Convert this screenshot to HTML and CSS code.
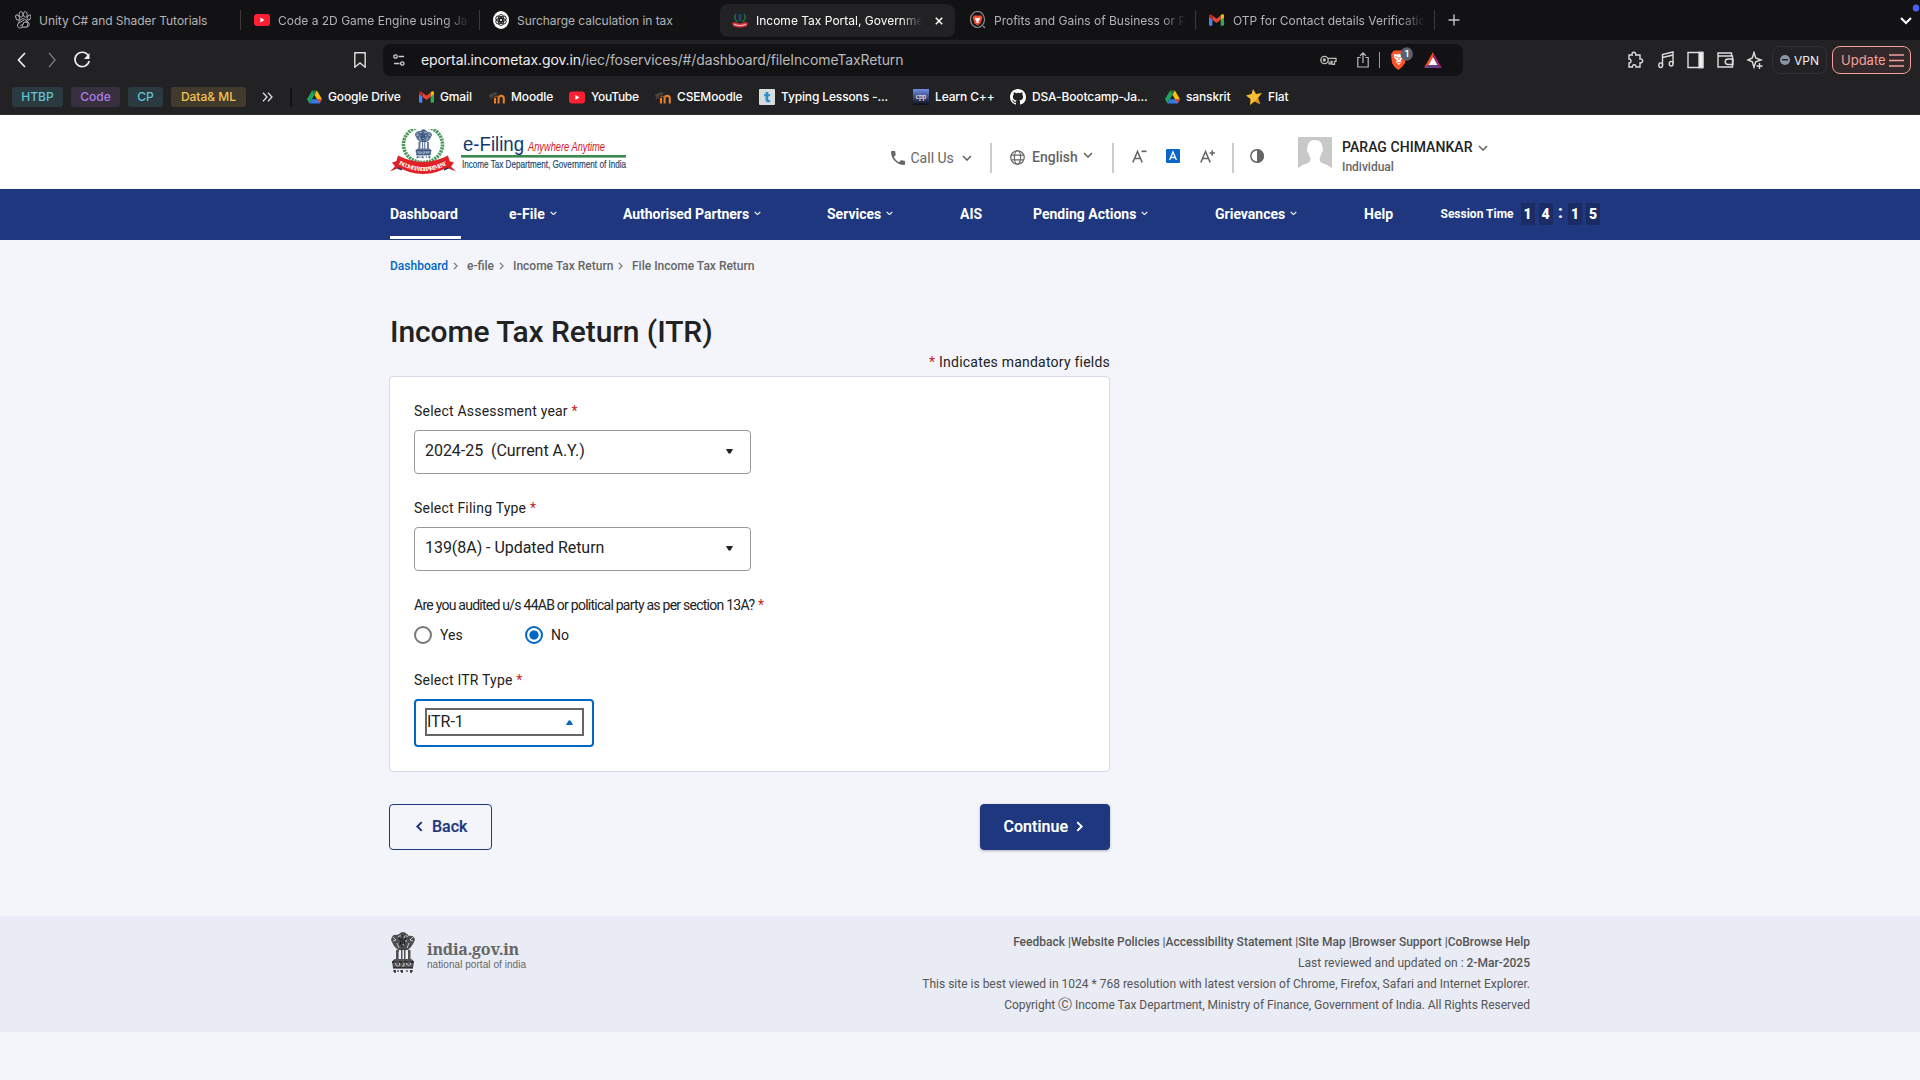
FILE: index.html
```html
<!DOCTYPE html>
<html lang="en">
<head>
<meta charset="utf-8">
<title>Income Tax Portal, Government of India</title>
<link rel="stylesheet" href="styles.css">
</head>
<body>
<svg class="defs" width="0" height="0" aria-hidden="true">
  <symbol id="yt" viewBox="0 0 16 12"><rect width="16" height="12" rx="3" fill="#ff1f33"/><path d="M6.4 3.6v4.8L10.4 6z" fill="#fff"/></symbol>
  <symbol id="gmail" viewBox="0 0 16 12"><path d="M0 1.5V11a1 1 0 0 0 1 1h2.6V5z" fill="#4285f4"/><path d="M16 1.5V11a1 1 0 0 1-1 1h-2.600V5z" fill="#34a853"/><path d="M12.400 1.200V5.800L16 3V1.500C16 0 14.200-.5 13.200.5z" fill="#fbbc04"/><path d="M3.600 5.800V1.200L8 4.600l4.400-3.400v4.600L8 9.200z" fill="#ea4335"/><path d="M0 1.500V3l3.600 2.800V1.200L2.800.5C1.800-.4 0 0 0 1.500z" fill="#c5221f"/></symbol>
  <symbol id="drive" viewBox="0 0 16 14"><path d="M5.400 0h5.200L8 4.600z" fill="#188038"/><path d="M5.400 0L8 4.600 2.700 14 0 9.300z" fill="#1ea362"/><path d="M5.400 9.300H16L13.300 14H2.700z" fill="#2f7de9"/><path d="M10.600 0L16 9.300h-5.300L8 4.600z" fill="#ffc107"/><path d="M10.700 9.300H16L13.300 14z" fill="#ea4335"/></symbol>
  <symbol id="moodle" viewBox="0 0 16 12"><path d="M6 12V6.500M9.600 12V7C9.600 3.300 14.800 3.300 14.800 7v5" fill="none" stroke="#ef7f22" stroke-width="2"/><path d="M5.500 5.500q2-1.800 4 .5" fill="none" stroke="#8a5327" stroke-width="1.500"/><path d="M0 3.500L6 1l2.500 1L3 4.500 4.500 6.500l-1 .5L1.500 4v4" fill="#4a4341" stroke="#5a4b42" stroke-width=".5"/></symbol>
  <symbol id="down" viewBox="0 0 10 6"><path d="M1 1l4 4 4-4" fill="none" stroke="currentColor" stroke-width="1.600"/></symbol>
  <symbol id="right" viewBox="0 0 6 10"><path d="M1 1l4 4-4 4" fill="none" stroke="currentColor" stroke-width="1.500"/></symbol>
  <symbol id="lions" viewBox="0 0 26 42">
    <path d="M9 3q4-4 8 0l2 2q5-1 6 4l-2 4-2 3-3 3H8L4 15 1 9q1-6 6-5z" fill="currentColor" opacity=".72"/>
    <path d="M6 19h3v10H6zM11 18h1.500v11H11zM14 18h1.500v11H14zM18 19h2.500v10H18zM2 31q2-4 6-3h10q4-1 6 3l-1 6H3z" fill="currentColor" opacity=".7"/>
    <path d="M3 6l3 3-3 1M23 6l-3 3 3 1M8 6q3-3 4 1M14 7q1-4 4-1M10 10h2m3 0h2M11 13q2 2 4 0M7 12l2 5m10-5l-2 5M9 21v7m8-7v7M5 32q4-3 5 2-3 3-5-2m11 1q4-4 5 0-2 3-5 0M12 31h2v4h-2" fill="none" stroke="#fff" stroke-width=".9" opacity=".75"/>
    <path d="M9 7l2 3-1 4M16 7l-2 3 1 4M12 4v12M2 31h22M3 37h20" fill="none" stroke="currentColor" stroke-width="1"/>
    <path d="M3 40h3m1 0h2m1 0h3m3 0h2m2 0h3M5 39v3m7-3v3m9-3v3" stroke="currentColor" stroke-width="1.200"/>
  </symbol>
</svg>

<div class="browser">
  <div class="tabs">
    <div class="tab"><svg class="fav" viewBox="0 0 16 18" fill="none" stroke="#a9a9ab" stroke-width="1"><ellipse cx="2.600" cy="6.500" rx="1.700" ry="2.700" transform="rotate(-25 2.600 6.500)"/><ellipse cx="6" cy="3.400" rx="1.900" ry="2.800"/><ellipse cx="10.300" cy="3.400" rx="1.900" ry="2.800"/><ellipse cx="14" cy="6.500" rx="1.600" ry="2.700" transform="rotate(25 14 6.500)"/><path d="M5 9q3-3 6 0l3 3q1 4-3 4-3-1-5 1-4 0-3.500-3zM4 12l5-3M5 15l7-5"/><path d="M9 11l4 1-1 4-5 0z" fill="#000"/></svg><span class="tt t1">Unity C# and Shader Tutorials</span></div>
    <div class="tab"><svg class="fav"><use href="#yt" width="16" height="14" y="2"/></svg><span class="tt fade">Code a 2D Game Engine using Java</span></div>
    <div class="tab plain"><svg class="fav" viewBox="0 0 16 18"><ellipse cx="8" cy="9" rx="8" ry="9" fill="#fff"/><g fill="none" stroke="#222" stroke-width=".9"><ellipse cx="8" cy="7" rx="2.600" ry="3.600"/><ellipse cx="8" cy="7" rx="2.600" ry="3.600" transform="rotate(60 8 9)"/><ellipse cx="8" cy="7" rx="2.600" ry="3.600" transform="rotate(120 8 9)"/><ellipse cx="8" cy="7" rx="2.600" ry="3.600" transform="rotate(180 8 9)"/><ellipse cx="8" cy="7" rx="2.600" ry="3.600" transform="rotate(240 8 9)"/><ellipse cx="8" cy="7" rx="2.600" ry="3.600" transform="rotate(300 8 9)"/></g></svg><span class="tt t3">Surcharge calculation in tax</span></div>
    <div class="tab active"><svg class="fav" viewBox="0 0 16 18"><path d="M4 3q-3 5 2 8M12 3q3 5-2 8" fill="none" stroke="#176b3c" stroke-width="1.600"/><path d="M8 3v7" stroke="#27406f" stroke-width="3"/><path d="M0 12l3-1q5 3 10 0l3 1-1 3q-7 3-14 0z" fill="#d9303e"/><path d="M2 13.500q6 2.500 12 0" stroke="#f6c9cc" fill="none"/></svg><span class="tt t4 fade">Income Tax Portal, Governmen</span><svg class="close" viewBox="0 0 8 8"><path d="M.8.8l6.400 6.400M7.200.8L.8 7.200" stroke="#fff" stroke-width="1.500"/></svg></div>
    <div class="tab"><svg class="fav" viewBox="0 0 16 18"><ellipse cx="7.500" cy="8.500" rx="7" ry="8" fill="none" stroke="#8e8e92" stroke-width="1.200"/><path d="M13 15l2 2" stroke="#8e8e92" stroke-width="1.400"/><path d="M4 4.500h7.500l1 2-2 6-3 2-3-2-2-6z" fill="#ef4a2e"/><path d="M5.500 6.500l2 .7 2-.7.700 1.500-1.700 2 .3 1.500-1.300.8-1.300-.8.300-1.500-1.700-2z" fill="#fff"/></svg><span class="tt fade">Profits and Gains of Business or Pr</span></div>
    <div class="tab"><svg class="fav"><use href="#gmail" width="15" height="13" y="2.500"/></svg><span class="tt fade">OTP for Contact details Verification</span></div>
    <svg class="plus" viewBox="0 0 12 12"><path d="M6 .5v11M.5 6h11" stroke="#c4c4c6" stroke-width="1.400"/></svg>
    <svg class="tabmenu" viewBox="0 0 24 30"><path d="M5 18l5 5 5-5" fill="none" stroke="#fff" stroke-width="2"/><ellipse cx="20" cy="8" rx="3.200" ry="3.500" fill="#4c63f0"/></svg>
  </div>

  <div class="toolbar">
    <svg class="navbtns" viewBox="0 0 84 20" fill="none"><path d="M9 3l-6.500 7L9 17" stroke="#eee" stroke-width="1.700"/><path d="M33 3l6 7-6 7" stroke="#737376" stroke-width="1.500"/><path d="M72.500 6A7.200 7.200 0 1 0 73.200 11" stroke="#eee" stroke-width="1.600"/><path d="M73.500 3v6h-5.500z" fill="#eee"/></svg>
    <svg class="bm" viewBox="0 0 12 16"><path d="M.8.800h10.400v14.400L6 11 .8 15.200z" fill="none" stroke="#ddd" stroke-width="1.400"/></svg>
    <div class="address">
      <svg class="tune" viewBox="0 0 12 12" fill="none" stroke="#ccc" stroke-width="1.300"><circle cx="2.500" cy="2.500" r="1.700"/><path d="M5.500 2.500H11M1 9.500h5.500"/><circle cx="9.300" cy="9.500" r="1.700"/></svg>
      <span class="url"><b>eportal.incometax.gov.in</b>/iec/foservices/#/dashboard/fileIncomeTaxReturn</span>
      <svg class="key" viewBox="0 0 17 12" fill="none" stroke="#bbb" stroke-width="1.300"><circle cx="4.500" cy="6" r="3.700"/><circle cx="4.300" cy="6" r="1" fill="#bbb"/><path d="M8 4.300h8v3h-1.500v3h-2.500v-3H11v2.500H9V7.500"/></svg>
      <svg class="share" viewBox="0 0 12 16" fill="none" stroke="#bbb" stroke-width="1.200"><path d="M3.500 5.500H.8V15h10.400V5.500H8.500M6 11V1M3 3.800l3-3 3 3"/></svg>
      <i class="vr"></i>
      <svg class="brave" viewBox="0 0 22 24"><path d="M3 3.500h9.500l3 3.500-1.500 9-3 4-3.700 3-3.700-3-2.600-4L0 7z" fill="#fb542b"/><path d="M2.800 7l3 .5L8 7l2.500.5 2.700-.5-1 4-2.400 2 .7 2.300-2.700 2.700-2.700-2.700.7-2.300-2.400-2z" fill="#fff"/><path d="M4.500 9.500l2 1M11.500 9.500l-2 1M8 10v3M6 15l2 1 2-1" stroke="#fb542b" fill="none"/><ellipse cx="15.700" cy="7" rx="6.200" ry="6.700" fill="#5a606e"/><text x="15.700" y="10.300" class="badge">1</text></svg>
      <svg class="bat" viewBox="0 0 18 16"><path d="M9 0L0 16l4.500-3L9 5z" fill="#ff4b1f"/><path d="M0 16h18l-4.500-3h-9z" fill="#6b3d8d"/><path d="M9 0l9 16-4.500-3L9 5z" fill="#a01f66"/><path d="M9 5l4.500 8h-9z" fill="#fff"/></svg>
    </div>
    <svg class="ext" viewBox="0 0 138 18" fill="none" stroke="#ddd" stroke-width="1.400"><path d="M2 4h3.200C4 .5 9.500.3 8.800 4H13v4c3.500-.8 3.500 4.500 0 3.800V16H9c.4-3-4-3-3.600 0H2v-4c2.600 0 2.600-4 0-4z"/><path d="M35.500 14V3.500L46 1v11.500M35.500 6.500L46 4"/><ellipse cx="33.700" cy="14.200" rx="1.900" ry="2.300"/><ellipse cx="44.200" cy="12.700" rx="1.900" ry="2.300"/><path d="M61 1.500h14.500v15H61z"/><path d="M72 1.500h4v15h-4z" fill="#eee"/><path d="M104.500 5V2H91v14h14.500V5H91M106 8h-5a2.500 2.500 0 0 0 0 5.500h5z"/><path d="M127 1.500l1.700 5.500 5.300 2-5.300 1.800-1.700 5.500-1.700-5.500L121 9l4.300-2zM132.500 12v6M129.500 15h6"/></svg>
    <div class="vpn"><i></i><span>VPN</span></div>
    <div class="update"><span>Update</span><svg viewBox="0 0 15 13"><path d="M0 1h15M0 6.500h15M0 12h15" stroke="#f5a09a" stroke-width="1.300"/></svg></div>
  </div>

  <div class="bookmarks">
    <span class="pill teal p1">HTBP</span><span class="pill purple p2">Code</span><span class="pill teal p3">CP</span><span class="pill gold p4">Data&amp; ML</span>
    <svg class="more" viewBox="0 0 11 10"><path d="M1 .8L5 5 1 9.200M6 .8L10 5 6 9.200" fill="none" stroke="#ddd" stroke-width="1.300"/></svg>
    <i class="sep"></i>
    <div class="links">
      <div><svg class="d"><use href="#drive"/></svg><span>Google Drive</span></div>
      <div><svg class="g"><use href="#gmail"/></svg><span>Gmail</span></div>
      <div><svg class="m"><use href="#moodle"/></svg><span>Moodle</span></div>
      <div><svg class="m"><use href="#yt"/></svg><span class="b4">YouTube</span></div>
      <div><svg class="m"><use href="#moodle"/></svg><span>CSEMoodle</span></div>
      <div><svg viewBox="0 0 16 16"><rect width="16" height="16" rx="1" fill="#d9dcde"/><path d="M6.500 3h2.800v2.300h1.900v2H9.300v3q0 1.400 1.900.9v1.900q-4.700 1-4.700-2.300V7.300H5v-2h1.500z" fill="#2f8fc4"/></svg><span>Typing Lessons -...</span></div>
      <div><svg viewBox="0 0 16 16"><defs><linearGradient id="cg" x2="0" y2="1"><stop stop-color="#6f8fe6"/><stop offset="1" stop-color="#0a0c18"/></linearGradient></defs><rect width="16" height="16" fill="url(#cg)"/><text x="8" y="10" class="cpp">cpp</text></svg><span>Learn C++</span></div>
      <div><svg viewBox="0 0 16 16"><path fill="#fff" d="M8 0C3.580 0 0 3.580 0 8c0 3.540 2.290 6.530 5.470 7.590.4.070.55-.17.55-.38 0-.19-.01-.82-.01-1.490-2.010.37-2.530-.49-2.690-.94-.09-.23-.48-.94-.82-1.130-.28-.15-.68-.52-.01-.53.63-.01 1.080.58 1.230.82.720 1.210 1.870.87 2.330.66.070-.52.280-.87.510-1.070-1.780-.2-3.640-.89-3.640-3.950 0-.87.310-1.590.82-2.150-.08-.2-.36-1.020.08-2.120 0 0 .67-.21 2.200.82a7.600 7.600 0 0 1 4 0c1.530-1.040 2.200-.82 2.200-.82.440 1.100.160 1.920.080 2.120.51.560.82 1.270.82 2.150 0 3.070-1.870 3.750-3.650 3.950.290.250.540.730.540 1.480 0 1.070-.01 1.930-.01 2.200 0 .21.150.46.550.38A8 8 0 0 0 16 8c0-4.420-3.580-8-8-8z"/></svg><span>DSA-Bootcamp-Ja...</span></div>
      <div><svg class="d"><use href="#drive"/></svg><span>sanskrit</span></div>
      <div><svg viewBox="0 0 16 16"><path d="M7 0l3 5 6-1-4 5 2 6-5.500-2.500L4 16l.5-6L0 6.500 5.500 5z" fill="#f8bd35"/><path d="M12 9l2 6-5.500-2.500" fill="#e58f1e"/></svg><span>Flat</span></div>
    </div>
  </div>
</div>

<header class="head">
  <svg class="logo" viewBox="0 0 240 50">
    <g transform="translate(0 -3.500)">
      <ellipse cx="33" cy="19" rx="19.500" ry="18" fill="none" stroke="#4a9a5c" stroke-width="3.600" stroke-dasharray="2.200 .8"/>
      <svg x="24" y="3" width="19" height="30" viewBox="0 0 26 42" color="#16386b"><use href="#lions" width="26" height="42"/></svg>
      <path d="M0 46l5-5-3-4 7-2 3 6zM66 46l-5-5 3-4-7-2-3 6z" fill="#d81f27"/><path d="M7 43l5-4v6zM59 43l-5-4v6z" fill="#1c2c6c"/>
      <path d="M8 30q25 13 50 0l3 10q-28 17-56 0z" fill="#e02128"/>
      <path id="arc" d="M8.500 38.500q24.500 14 50 0" fill="none"/>
      <text class="ribbon"><textPath href="#arc" textLength="51">INCOME TAX DEPARTMENT</textPath></text>
    </g>
    <text x="73" y="22" class="lg1" textLength="61" lengthAdjust="spacingAndGlyphs">e-Filing</text>
    <text x="138" y="21.500" class="lg2" textLength="77" lengthAdjust="spacingAndGlyphs">Anywhere Anytime</text>
    <rect x="71" y="26" width="165" height="2.600" fill="#3a8a50"/>
    <text x="72" y="38.700" class="lg3" textLength="164" lengthAdjust="spacingAndGlyphs">Income Tax Department, Government of India</text>
  </svg>
  <div class="tools">
    <div class="call"><svg viewBox="3 3 18 18"><path d="M6.620 10.790c1.440 2.830 3.760 5.150 6.590 6.590l2.200-2.200c.28-.28.670-.36 1.020-.25 1.120.37 2.320.57 3.570.57.550 0 1 .45 1 1V20c0 .55-.45 1-1 1C10.610 21 3 13.390 3 4c0-.55.45-1 1-1h3.500c.55 0 1 .45 1 1 0 1.250.2 2.450.57 3.570.11.350.030.740-.25 1.020z" fill="#666"/></svg><span>Call Us</span><svg class="chev"><use href="#down"/></svg></div>
    <i class="bar"></i>
    <div class="lang"><svg viewBox="0 0 16 16" fill="none" stroke="#666" stroke-width="1.300"><circle cx="8" cy="8" r="7.200"/><ellipse cx="8" cy="8" rx="3.300" ry="7.200"/><path d="M1.300 5.500h13.400M1.300 10.500h13.400"/></svg><span>English</span><svg class="chev"><use href="#down"/></svg></div>
    <i class="bar"></i>
    <svg class="asz" viewBox="0 0 16 15"><path d="M.8 13.500L5.500 2.500l4.700 11M2.500 9.500h6" fill="none" stroke="#666" stroke-width="1.600"/><path d="M9.500 2.300h5" stroke="#666" stroke-width="1.700"/></svg>
    <svg class="abox" viewBox="0 0 14 14"><rect width="14" height="14" rx="1" fill="#0a66c8"/><path d="M3.600 11L7 3l3.400 8M4.800 8.500h4.400" fill="none" stroke="#fff" stroke-width="1.300"/></svg>
    <svg class="asz" viewBox="0 0 16 15"><path d="M.8 13.500L5.500 2.500l4.700 11M2.500 9.500h6" fill="none" stroke="#666" stroke-width="1.600"/><path d="M9.500 4h5.500M12.200 1.200v5.600" stroke="#666" stroke-width="1.500"/></svg>
    <i class="bar"></i>
    <svg class="abox" viewBox="0 0 14 14"><circle cx="7" cy="7" r="6.200" fill="none" stroke="#666" stroke-width="1.500"/><path d="M7 0a7 7 0 0 1 0 14z" fill="#666"/></svg>
    <div class="user"><svg class="avatar" viewBox="0 0 34 34"><rect width="34" height="34" rx="1" fill="#c8c8c8"/><path d="M17 3c5 0 7.500 3 7.500 8 1 1 .5 4-1 5-.7 3-1.500 4-2 5 0 4 2 5 5 6s6.500 2.500 7.500 5v2H0v-2c1-2.500 4.500-4 7.500-5s5-2 5-6c-.5-1-1.300-2-2-5-1.500-1-2-4-1-5 0-5 2.500-8 7.500-8z" fill="#fff"/></svg>
      <div class="who"><div class="name"><span>PARAG CHIMANKAR</span><svg class="chev"><use href="#down"/></svg></div><span class="role">Individual</span></div></div>
  </div>
</header>

<nav class="nav">
  <div class="cur"><span>Dashboard</span></div>
  <div><span>e-File</span><svg><use href="#down"/></svg></div>
  <div><span class="np">Authorised Partners</span><svg><use href="#down"/></svg></div>
  <div><span>Services</span><svg><use href="#down"/></svg></div>
  <div><span>AIS</span></div>
  <div><span>Pending Actions</span><svg><use href="#down"/></svg></div>
  <div><span>Grievances</span><svg><use href="#down"/></svg></div>
  <div><span>Help</span></div>
  <div class="session"><span>Session Time</span><b>1</b><b>4</b><em>:</em><b>1</b><b>5</b></div>
</nav>

<main class="main">
  <div class="crumbs">
    <div class="home"><span>Dashboard</span><svg><use href="#right"/></svg></div>
    <div><span>e-file</span><svg><use href="#right"/></svg></div>
    <div><span>Income Tax Return</span><svg><use href="#right"/></svg></div>
    <div><span>File Income Tax Return</span></div>
  </div>
  <h1>Income Tax Return (ITR)</h1>
  <p class="mand"><i>*</i> Indicates mandatory fields</p>
  <section class="card">
    <label>Select Assessment year <i>*</i></label>
    <div class="select"><span>2024-25&nbsp; (Current A.Y.)</span><svg viewBox="0 0 7 5"><path d="M0 0h7L4.500 4.500h-2z" fill="#222"/></svg></div>
    <label>Select Filing Type <i>*</i></label>
    <div class="select"><span>139(8A) - Updated Return</span><svg viewBox="0 0 7 5"><path d="M0 0h7L4.500 4.500h-2z" fill="#222"/></svg></div>
    <label><span class="tight">Are you audited u/s 44AB or political party as per section 13A?</span> <i>*</i></label>
    <div class="radios"><i class="radio"></i><span class="yes">Yes</span><i class="radio on"></i><span>No</span></div>
    <label>Select ITR Type <i>*</i></label>
    <div class="select open"><div class="focus"><span>ITR-1</span><svg viewBox="0 0 7 5"><path d="M0 5h7L4.500.5h-2z" fill="#0067c5"/></svg></div></div>
  </section>
  <div class="actions">
    <button class="back"><svg viewBox="0 0 7 10"><path d="M6 1L2 5l4 4" fill="none" stroke="currentColor" stroke-width="1.800"/></svg><span>Back</span></button>
    <button class="cont"><span>Continue</span><svg viewBox="0 0 7 10"><path d="M1 1l4 4-4 4" fill="none" stroke="currentColor" stroke-width="1.800"/></svg></button>
  </div>
</main>

<footer class="foot">
  <svg class="emblem" viewBox="0 0 26 42"><use href="#lions"/></svg>
  <div class="gov"><span class="g1">india.gov.in</span><span class="g2">national portal of india</span></div>
  <div class="legal">
    <p class="strong">Feedback |Website Policies |Accessibility Statement |Site Map |Browser Support |CoBrowse Help</p>
    <p>Last reviewed and updated on : <b>2-Mar-2025</b></p>
    <p>This site is best viewed in 1024 * 768 resolution with latest version of Chrome, Firefox, Safari and Internet Explorer.</p>
    <p class="copy">Copyright <span class="cc">Ⓒ</span> Income Tax Department, Ministry of Finance, Government of India. All Rights Reserved</p>
  </div>
</footer>
</body>
</html>
```
FILE: styles.css
```css
* { box-sizing: border-box; }
body { margin: 0; width: 1920px; height: 1080px; overflow: hidden; background: #f4f5fa; font-family: Roboto, "Noto Sans", sans-serif; color: #222; }
span { white-space: nowrap; }
i, em { font-style: normal; }
p { margin: 0; }
svg { flex: none; display: block; }
.defs { position: absolute; }

.browser { height: 115px; background: #222224; font-family: Inter, sans-serif; color: #fff; }
.tabs { height: 40px; background: #121214; display: flex; align-items: center; padding-left: 2px; }
.tab { width: 239px; height: 33px; display: flex; align-items: center; padding-left: 13px; gap: 8px; color: #b4b4b6; font-size: 12px; background: linear-gradient(#3a3a3d, #3a3a3d) right 0 center / 1px 20px no-repeat; }
.tab.plain { background: none; }
.tab.active { background: #222224; border-radius: 8px; width: 235px; margin: 0 2px 0 1px; padding-left: 12px; color: #fff; }
.tt { padding-top: 1px; }
.t1, .t3 { letter-spacing: -.05px; }
.fav { width: 16px; height: 18px; }
.fade { overflow: hidden; width: 192px; -webkit-mask-image: linear-gradient(90deg, #000 87%, transparent); mask-image: linear-gradient(90deg, #000 87%, transparent); }
.t4.fade { width: 166px; }
.close { width: 8px; height: 8px; margin: 1px 0 0 5px; }
.plus { width: 12px; height: 12px; margin-left: 13px; }
.tabmenu { width: 24px; height: 30px; margin-left: auto; align-self: flex-start; }

.toolbar { height: 40px; display: flex; align-items: center; }
.navbtns { width: 84px; height: 20px; margin-left: 16px; }
.bm { width: 12px; height: 16px; margin-left: 254px; }
.address { width: 1080px; height: 32px; margin-left: 17px; background: #121214; border-radius: 8px; display: flex; align-items: center; padding-left: 10px; }
.tune { width: 12px; height: 12px; }
.url { margin: -1px 0 0 16px; width: 885px; font-size: 14px; letter-spacing: -.125px; color: #b9b9bb; }
.url b { font-weight: 400; color: #eee; }
.key { width: 17px; height: 12px; margin-left: 14px; }
.share { width: 12px; height: 16px; margin-left: 20px; }
.vr { width: 1px; height: 16px; background: #999; margin-left: 10px; }
.brave { width: 22px; height: 24px; margin: -3px 0 0 11px; }
.badge { font: 600 9.500px Inter, sans-serif; fill: #fff; text-anchor: middle; }
.bat { width: 18px; height: 16px; margin-left: 11px; }
.ext { width: 138px; height: 18px; margin-left: 164px; }
.vpn { width: 55px; height: 28px; margin-left: 7px; border: 1px solid #303033; border-radius: 8px; display: flex; align-items: center; padding-left: 7px; font-size: 12px; color: #eee; }
.vpn i { width: 10px; height: 10px; border-radius: 50%; margin-right: 4px; background: linear-gradient(#222, #222) center / 6px 1.500px no-repeat, #8e94a8; }
.update { width: 79px; height: 28px; margin-left: 5px; border: 1px solid #f5a09a; border-radius: 8px; background: #33282b; display: flex; align-items: center; justify-content: space-between; padding: 0 6px 0 8px; color: #f5a09a; font-size: 13px; }
.update svg { width: 15px; height: 13px; }

.bookmarks { height: 35px; display: flex; align-items: center; padding-left: 12px; font-size: 12px; font-weight: 500; border-bottom: 1px solid #2d2d30; }
.pill { height: 20px; line-height: 19px; border-radius: 3px; text-align: center; margin-right: 8px; }
.p1 { width: 51px; } .p2 { width: 49px; } .p3 { width: 35px; } .p4 { width: 75px; }
.teal { background: #2a3a40; color: #62c3d2; }
.purple { background: #37303f; color: #b07ee8; }
.gold { background: #423a2c; color: #f2c353; }
.more { width: 11px; height: 10px; margin-left: 8px; }
.sep { width: 2px; height: 19px; background: #111113; margin: 0 15px 0 17px; }
.links { display: grid; grid-template-columns: 112px 70px 80px 86px 104px 154px 97px 155px 81px 60px; letter-spacing: -.14px; }
.links div { display: flex; align-items: center; gap: 6px; }
.links span { margin-top: -1px; }
.links .b4 { letter-spacing: -.3px; }
.links svg { width: 16px; height: 16px; }
.links .d { width: 15px; height: 14px; }
.links .g { width: 15px; height: 12px; }
.links .m { width: 16px; height: 13px; }
.cpp { font: 7.500px "Liberation Serif", serif; fill: #fff; text-anchor: middle; }

.head { height: 74px; background: #fff; display: flex; padding-left: 390px; }
.logo { width: 240px; height: 50px; margin-top: 14px; overflow: hidden; }
.ribbon { font: bold 6px "Liberation Serif", serif; fill: #fff; }
.lg1 { font: 20px "Liberation Sans", sans-serif; fill: #13396e; }
.lg2 { font: italic 12px "Liberation Sans", sans-serif; fill: #d8141c; }
.lg3 { font: 11.500px "Liberation Sans", sans-serif; fill: #1c4870; stroke: #1c4870; stroke-width: .2; }
.tools { margin-left: 261px; display: grid; grid-template-columns: 99px 20px 102px 20px 34px 34px 32px 18px 48px auto; height: 74px; color: #666; font-size: 14px; }
.tools > * { margin-top: 28px; }
.bar { width: 2px; height: 30px; background: #ccc; }
.call, .lang { height: 30px; display: flex; align-items: center; }
.call svg:first-child { width: 14px; height: 14px; margin-right: 5.500px; }
.lang { height: 28px; font-weight: 500; }
.lang svg:first-child { width: 15px; height: 15px; margin-right: 7px; }
.chev, .tools .call .chev { width: 10px; height: 6px; margin-left: 8px; }
.tools .call .chev { margin-top: -1px; }
.lang .chev { margin-left: 5px; margin-top: -4px; }
.tools .asz { width: 16px; height: 15px; margin-top: 34px; }
.tools .abox { width: 14px; height: 14px; margin-top: 34px; }
.tools .user { display: flex; margin-top: 22px; }
.avatar { width: 34px; height: 34px; }
.who { margin-left: 10px; }
.name { display: flex; align-items: center; height: 20px; color: #222; font-weight: 500; letter-spacing: .05px; }
.name .chev { color: #666; margin: 2px 0 0 5px; }
.role { display: block; font-size: 12px; font-weight: 500; line-height: 20px; }

.nav { height: 51px; background: #1e377f; color: #fff; padding-left: 390px; display: grid; grid-template-columns: 119px 114px 204px 133px 73px 182px 149px 76px auto; font-size: 14px; font-weight: 700; }
.nav div { display: flex; align-items: center; padding-bottom: 1px; }
.nav svg { width: 7px; height: 4.500px; margin: -2px 0 0 5px; }
.nav .np { letter-spacing: -.05px; }
.nav .cur { width: 71px; box-shadow: inset 0 -1px #1e377f, inset 0 -4px #fff; }
.nav .session { font-size: 12px; }
.session b { width: 14px; height: 22px; background: #1a2c63; font-size: 14px; line-height: 22px; text-align: center; margin-right: 4px; }
.session span { width: 80.500px; padding-left: .5px; }
.session em { width: 8px; font-size: 19px; line-height: 20px; text-align: center; margin: -4px 3.500px 0 0; }

.main { padding-left: 389px; width: 1110px; height: 676px; }
.crumbs { display: grid; grid-template-columns: 77px 46px 119px auto; padding: 17px 0 0 1px; height: 36px; color: #666; font-size: 12px; font-weight: 500; }
.crumbs div { display: flex; align-items: center; height: 18px; }
.crumbs svg { width: 5px; height: 8px; margin-left: 5px; color: #777; }
.home { color: #0067c5; }
h1 { margin: 36px 0 0 1px; font-size: 30px; font-weight: 500; line-height: 40px; letter-spacing: -.08px; }
.mand { text-align: right; font-size: 14px; line-height: 20px; height: 24px; letter-spacing: .22px; }
.mand i, label i { color: #cc1d1d; }
.card { height: 396px; background: #fff; border: 1px solid #d5daea; border-radius: 4px; padding: 24px 0 0 24px; }
label { display: block; height: 29px; line-height: 20px; font-size: 14px; letter-spacing: .21px; }
.tight { letter-spacing: -.75px; }
.select { width: 337px; height: 44px; border: 1px solid #999; border-radius: 4px; margin-bottom: 24px; padding: 0 17.500px 0 10px; display: flex; align-items: center; justify-content: space-between; font-size: 16px; letter-spacing: -.04px; }
.select span { margin-top: -3px; }
.select svg { width: 7px; height: 5px; margin-top: -2px; }
.radios { display: flex; align-items: center; height: 18px; font-size: 14px; margin: 2px 0 26px; }
.radio { width: 18px; height: 18px; border: 2px solid #777; border-radius: 50%; margin-right: 8px; }
.radio.on { border-color: #0067c5; background: radial-gradient(circle, #0067c5 4.200px, transparent 5px); }
.yes { width: 85px; }
.open { width: 180px; height: 48px; border: 2px solid #0067c5; padding: 0 8px 0 9px; margin-bottom: 0; }
.focus { width: 159px; height: 28px; margin-top: -2px; border: 2px solid #666; display: flex; align-items: center; justify-content: space-between; padding-right: 9px; }
.focus span { margin-top: -2px; }
.focus svg { margin: 1px 0 0; }
.actions { display: flex; justify-content: space-between; margin-top: 32px; }
button { height: 46px; border: 1px solid #1e377f; border-radius: 4px; font: 500 16px Roboto, sans-serif; display: flex; align-items: center; padding: 0 0 2px; }
button svg { width: 8px; height: 11px; margin-top: 1px; }
.back { width: 103px; background: none; color: #1e377f; padding-left: 24.500px; -webkit-text-stroke: .2px; }
.back span { margin-left: 9.500px; }
.cont { width: 130px; background: #1e377f; color: #fff; padding-left: 22.500px; box-shadow: 0 1px 3px #0004; letter-spacing: .05px; -webkit-text-stroke: .2px; }
.cont span { margin-right: 7.500px; }

.foot { height: 116px; background: #e9ecf4; display: flex; padding: 16px 390px 0 390px; color: #555; font-size: 12px; }
.emblem { width: 26px; height: 42px; color: #111; margin-top: -1px; }
.gov { margin: 7px 0 0 11px; color: #666; }
.gov span { display: block; }
.g1 { font: bold 16px/20px "Noto Serif", "Liberation Serif", serif; letter-spacing: -.25px; }
.g2 { font: 10px/11px "Liberation Sans", sans-serif; letter-spacing: .05px; }
.legal { margin-left: auto; text-align: right; line-height: 21px; white-space: nowrap; }
.legal b, .strong { font-weight: 500; }
.copy { letter-spacing: -.03px; height: 21px; }
.cc { font: 14px/12px "DejaVu Sans", sans-serif; }
```
